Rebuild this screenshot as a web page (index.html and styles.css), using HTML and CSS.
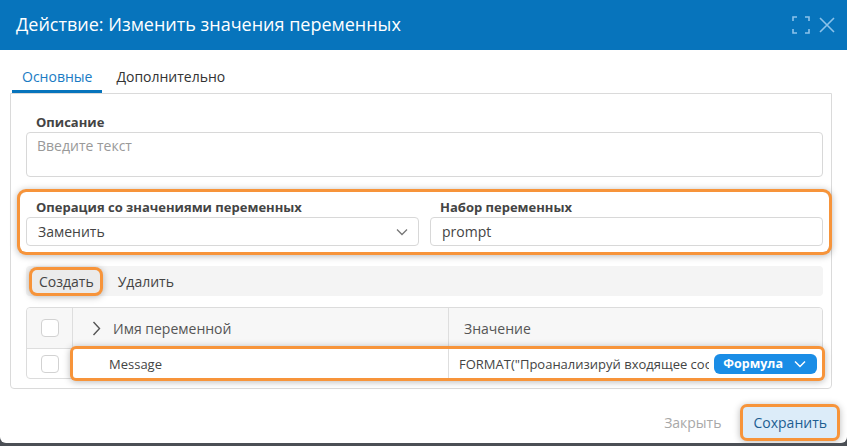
FILE: index.html
```html
<!DOCTYPE html>
<html lang="ru">
	<head>
		<meta charset="UTF-8" />
		<title>Изменить значения переменных</title>
		<link rel="stylesheet" href="styles.css">
	</head>
	<body>
		<div class="dialog">
			<div class="dialog-header">
				<h1>Действие: Изменить значения переменных</h1>
				<div class="header-tools">
					<svg width="18" height="18" viewBox="0 0 18 18" class="tool-icon">
						<path d="M1 5V1h4M13 1h4v4M17 13v4h-4M5 17H1v-4" fill="none" stroke="currentColor" stroke-width="1.6" />
					</svg>
					<svg width="16" height="16" viewBox="0 0 16 16" class="tool-icon">
						<path d="M1 1l14 14M15 1L1 15" fill="none" stroke="currentColor" stroke-width="1.6" />
					</svg>
				</div>
			</div>

			<div class="tabs">
				<div class="tab active">Основные</div>
				<div class="tab">Дополнительно</div>
			</div>

			<div class="panel">
				<div class="label">Описание</div>
				<div class="textarea">Введите текст</div>

				<!-- выделенная строка полей -->
				<div class="fields hl">
					<div class="field">
						<div class="label">Операция со значениями переменных</div>
						<div class="input select">
							<span>Заменить</span>
							<svg width="12" height="8" viewBox="0 0 12 8">
								<path d="M1 1.5l5 5 5-5" fill="none" stroke="#777" stroke-width="1.3" />
							</svg>
						</div>
					</div>
					<div class="field">
						<div class="label">Набор переменных</div>
						<div class="input">prompt</div>
					</div>
				</div>

				<div class="toolbar">
					<button class="tb-btn pressed hl">Создать</button>
					<button class="tb-btn">Удалить</button>
				</div>

				<div class="grid">
					<div class="grid-row grid-head">
						<div class="cell check-cell"><span class="checkbox"></span></div>
						<div class="row-main">
							<div class="cell name-head">
								<svg width="9" height="15" viewBox="0 0 9 15">
									<path d="M1.5 1l6 6.5-6 6.5" fill="none" stroke="#555" stroke-width="1.4" />
								</svg>
								Имя переменной
							</div>
							<div class="cell value-head">Значение</div>
						</div>
					</div>
					<div class="grid-row">
						<div class="cell check-cell"><span class="checkbox"></span></div>
						<div class="row-main hl">
							<div class="cell name-cell">Message</div>
							<div class="cell value-cell">
								<span class="value-text">FORMAT("Проанализируй входящее сообщение пользователя")</span>
								<span class="pill">
									Формула
									<svg width="12" height="8" viewBox="0 0 12 8">
										<path d="M1 1.5l5 5 5-5" fill="none" stroke="#fff" stroke-width="1.5" />
									</svg>
								</span>
							</div>
						</div>
					</div>
				</div>
			</div>

			<div class="footer">
				<button class="btn-link">Закрыть</button>
				<button class="btn-primary hl">Сохранить</button>
			</div>
		</div>
	</body>
</html>
```

FILE: styles.css
```css
body {
	margin: 0;
	background: #4b4f55;
	font-family: "Open Sans", "Noto Sans", sans-serif;
	font-size: 14px;
	color: #333;
}

.dialog {
	width: 847px;
	height: 443px;
	background: #fff;
	border-radius: 0 0 6px 6px;
	overflow: hidden;
}

/* Header */
.dialog-header {
	height: 50px;
	background: #0774bc;
	display: flex;
	align-items: center;
	padding: 0 12px 0 16px;
}
.dialog-header h1 {
	flex: 1;
	margin: 0;
	font-size: 18px;
	font-weight: 400;
	color: #fff;
	margin-top: -2px;
}
.header-tools {
	display: flex;
	align-items: center;
	gap: 9px;
	color: #8cc2ea;
}
.tool-icon {
	display: block;
}

/* Tabs */
.tabs {
	display: flex;
	gap: 4px;
	margin-left: 12px;
}
.tab {
	padding: 17px 10px 3px;
	line-height: 20px;
	border-bottom: 3px solid transparent;
	color: #333;
}
.tab.active {
	color: #1a7bc4;
	border-bottom-color: #0774bc;
}

/* Panel */
.panel {
	margin: 0 15px 0 10px;
	border: 1px solid #dadada;
	border-radius: 0 0 4px 4px;
	padding: 19px 8px 9px 15px;
}
.label {
	font-size: 13px;
	font-weight: 700;
	line-height: 18px;
	color: #444;
	padding-left: 10px;
	margin-bottom: 1px;
}
.textarea {
	height: 45px;
	box-sizing: border-box;
	border: 1px solid #d8d8d8;
	border-radius: 4px;
	padding: 3px 10px;
	color: #999;
	line-height: 20px;
}

.hl {
	box-shadow: 0 0 0 3px #f7943a, 0 1px 7px 3px rgba(0, 0, 0, 0.28);
}

.fields {
	display: grid;
	grid-template-columns: 1fr 1fr;
	gap: 11px;
	margin: 15px -6px 0;
	padding: 6px;
	border-radius: 6px;
}
.input {
	height: 29px;
	box-sizing: border-box;
	border: 1px solid #d8d8d8;
	border-radius: 4px;
	padding: 0 11px;
	line-height: 27px;
	color: #444;
}
.select {
	display: flex;
	align-items: center;
	justify-content: space-between;
	padding-right: 10px;
}

/* Toolbar */
.toolbar {
	margin-top: 14px;
	height: 30px;
	background: #f4f4f4;
	border-radius: 4px;
	display: flex;
	align-items: center;
	gap: 13px;
	padding: 0 6px;
}
button {
	font-family: inherit;
	font-size: 14px;
	border: none;
	background: none;
	cursor: pointer;
	color: #444;
}
.tb-btn {
	height: 23px;
	padding: 0 5px;
	border-radius: 4px;
	line-height: 23px;
}
.tb-btn.pressed {
	padding: 0 6px 0 7px;
	background: #ebebeb;
	border-radius: 5px;
}

/* Grid */
.grid {
	margin-top: 11px;
	border: 1px solid #dcdcdc;
	border-radius: 4px;
}
.grid-row {
	display: flex;
	height: 29px;
}
.grid-head {
	height: 40px;
	background: #f7f7f7;
	border-bottom: 1px solid #dedede;
	border-radius: 4px 4px 0 0;
}
.cell {
	display: flex;
	align-items: center;
	box-sizing: border-box;
}
.check-cell {
	width: 46px;
	justify-content: center;
	border-right: 1px solid #dedede;
}
.checkbox {
	width: 16px;
	height: 16px;
	border: 1px solid #d2d2d2;
	border-radius: 4px;
	background: #fff;
}
.row-main {
	flex: 1;
	display: grid;
	grid-template-columns: 376px 1fr;
	border-radius: 3px;
	background: #fff;
}
.grid-head .row-main {
	background: none;
}
.name-head {
	padding-left: 19px;
	gap: 12px;
	color: #555;
	border-right: 1px solid #dedede;
}
.value-head {
	padding-left: 15px;
	color: #555;
}
.name-cell {
	padding-left: 36px;
	font-size: 13px;
	color: #444;
	border-right: 1px solid #dedede;
}
.value-cell {
	padding: 0 5px 0 10px;
	font-size: 13px;
	color: #444;
	min-width: 0;
}
.value-text {
	flex: 1;
	white-space: nowrap;
	overflow: hidden;
}
.pill {
	display: flex;
	align-items: center;
	gap: 11px;
	height: 20px;
	padding: 0 11px 0 9px;
	margin-left: 5px;
	background: #1a8de6;
	border-radius: 6px;
	color: #fff;
	font-weight: 700;
	font-size: 12.5px;
}

/* Footer */
.footer {
	display: flex;
	justify-content: flex-end;
	align-items: center;
	gap: 11px;
	padding: 18px 10px 0;
}
.btn-link {
	color: #a8a8a8;
	padding: 0 11px;
	height: 31px;
}
.btn-primary {
	height: 31px;
	padding: 0 10px;
	background: #dcecf9;
	color: #1d5e92;
	border-radius: 4px;
}
```
